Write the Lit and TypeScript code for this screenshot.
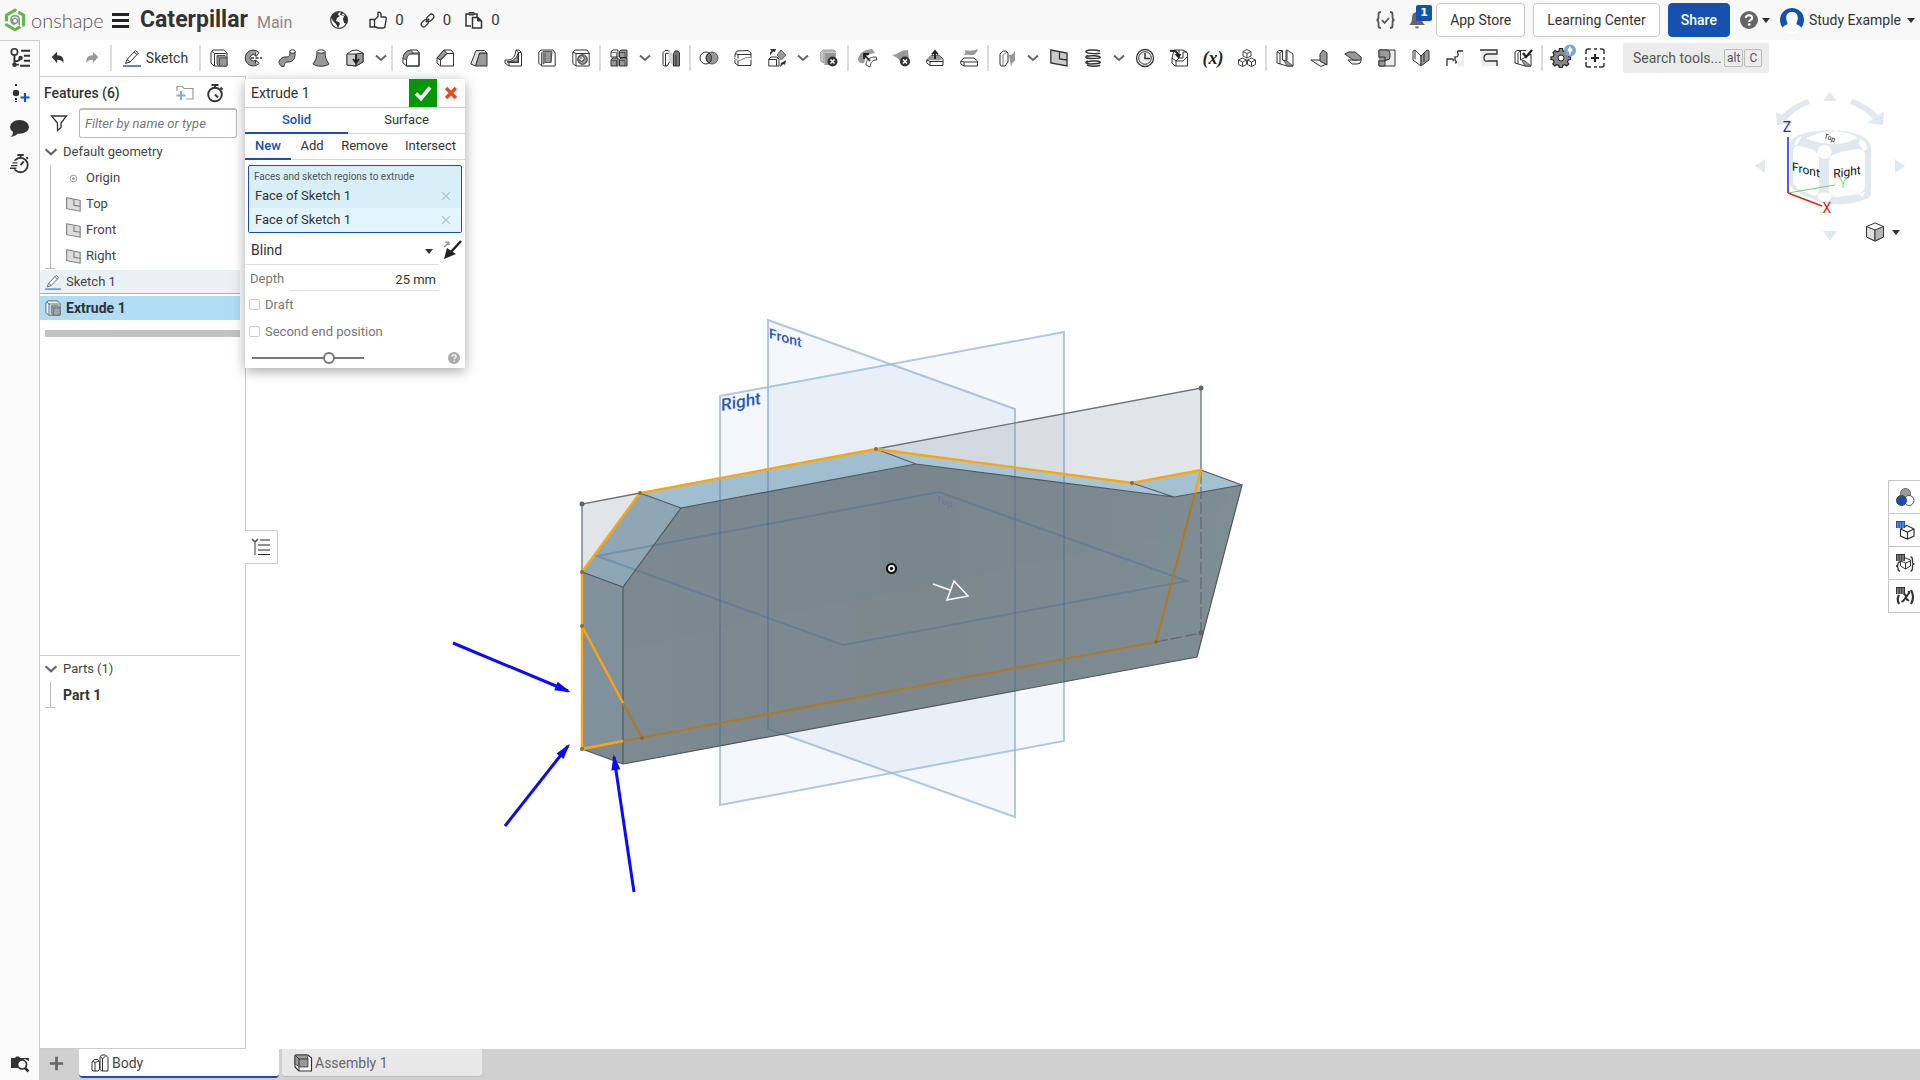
import { LitElement, html, svg, css, TemplateResult, SVGTemplateResult } from "lit";
import { customElement, state } from "lit/decorators.js";
import { classMap } from "lit/directives/class-map.js";

/* Icon strokes are drawn on an 18-unit grid. */
const K = "#333";
const G = "#999";

const ICONS: Record<string, SVGTemplateResult> = {
  undo: svg`<path d="M2 8 8 2v4c6 0 8 4 7 9-1-3-3-4-7-4v4z" fill="#333"/>`,
  redo: svg`<path d="M16 8 10 2v4c-6 0-8 4-7 9 1-3 3-4 7-4v4z" fill="#999"/>`,
  sketch: svg`<path d="M2.500 14.500 4 10.500 12.500 1.500 15.500 4 7 13z M4 10.500 7 13 M11 3l3 2.500" fill="#fff" stroke=${K}/><path d="M0 17h18" stroke="#1651b0" stroke-width="1.400"/>`,
  extrude: svg`<path d="M1 3.500 3 1h11l3 3v13H4l-3-3z" fill="#fff" stroke=${K}/><path d="M4.500 17V4.500L2 2.500M4.500 4.500H16" fill="none" stroke=${K}/><path d="M7 6.500h8l2 2V17H9l-2-2z" fill=${G} stroke="#555"/><path d="M9.500 17V9H17M9.500 9 7.500 7" fill="none" stroke="#555"/>`,
  revolve: svg`<path d="M15 3.500A8 8 0 1 0 15 14.500L11.500 11A3.200 3.200 0 1 1 11.500 6.500z" fill=${G} stroke=${K}/><path d="M11.500 3.500 12 7.500 15 3.500M11.500 14.500V11L15 14.500" fill="#fff" stroke=${K}/><path d="M7 9h11" stroke=${K} stroke-width="1.500" stroke-dasharray="3 1.500"/>`,
  sweep: svg`<path d="M1 12.500c2-4 4-4.500 7-4.500 3.500 0 4-1.500 4-6h5c.500 7-1 11-7 11-3 0-3 1-4 4.500-3 .500-5-2-5-5z" fill=${G} stroke=${K}/><ellipse cx="14.500" cy="2.500" rx="2.700" ry="1.800" fill="#fff" stroke=${K}/>`,
  loft: svg`<path d="M5 2.500C5 8 4 11 1 15c4 3 12 3 16 0-3-4-4-7-4-12.500z" fill=${G} stroke=${K}/><ellipse cx="9" cy="2.500" rx="4" ry="1.700" fill="#fff" stroke=${K}/>`,
  thicken: svg`<path d="M1 5 6 1.500l5-.500 6 3v9l-7 4-9-1z" fill="#fff" stroke=${K}/><path d="M1 5h9v12l-9-1z" fill="#ccc" stroke=${K}/><path d="M10 5l7-1v9l-7 4z" fill=${G} stroke=${K}/><path d="M10 5.500v7M7 10l3 4 3-4" fill="none" stroke="#222" stroke-width="1.800"/>`,
  fillet: svg`<path d="M4.500 17V10q0-5 5-5H17v12z" fill="#fff" stroke=${K}/><path d="M1 14V9q1-7 8-8h6l2.500 3H10q-5.500 0-5.500 6v7z" fill="#fff" stroke=${K}/><path d="M1 9.500Q1.500 2 9 1l2.500 3.500Q5 4 4.500 11z" fill=${G} stroke=${K} stroke-width=".7"/><path d="M4.500 17h12.500V4" fill="none" stroke=${K} stroke-width="1.200"/>`,
  chamfer: svg`<path d="M1 14V9l7-8h7l2.500 3v13H4.500z" fill="#fff" stroke=${K}/><path d="M1 9l7-8 3 3.500-6.500 6.500z" fill=${G} stroke=${K}/><path d="M4.500 17v-6L11 4.500h6" fill="none" stroke=${K}/>`,
  draft: svg`<path d="M5.500 17 9.500 4H17v13z" fill=${G} stroke=${K}/><path d="M.8 15 6 1.500h8.500L17 4H9.500L5.500 17z" fill="#ddd" stroke=${K}/>`,
  rib: svg`<path d="M12 1h3l2.500 2.500V17H5l-4-3v-3h4q6-1 7-10z" fill="#fff" stroke=${K}/><path d="M14 4.500V13H3Q12 12 14 4.500z" fill=${G} stroke=${K}/><path d="M5 17v-3.500h9.500V3.500H17M14 3.500 12 1" fill="none" stroke=${K}/>`,
  shell: svg`<path d="M.8 3 3 1h12l2.200 3v13H4l-3.200-2.500z" fill="#fff" stroke=${K}/><path d="M5 2.500h9l-1 11H7L5 15z" fill=${G} stroke="#555"/><path d="M3.500 17V3.500M7 4v9.500h6V4" fill="none" stroke="#555"/>`,
  hole: svg`<path d="M.8 3 3 1h12l2.200 3v13H4l-3.200-2.500z" fill="#fff" stroke=${K}/><path d="M4 17V4.500h13M4 4.500.8 3" fill="none" stroke=${K}/><circle cx="10.500" cy="10.500" r="4.800" fill=${G} stroke=${K}/><circle cx="9.500" cy="9.500" r="2.700" fill="#fff" stroke=${K}/><circle cx="9" cy="9" r="1.400" fill=${G}/>`,
  pattern: svg`<path d="M1 2.500 3 1h5v7H1z" fill="#fff" stroke=${K}/><path d="M9.500 2.500 11 1h6v7.500H9.500zM1 10.500 3 9h5v8H1zM9.500 10.500 11 9h6v8H9.500z" fill=${G} stroke=${K}/><path d="M9.500 3.500h5.500v5M1 11.500h5.500V17M9.500 11.500H15V17M1 3.500h5.500v5" fill="none" stroke=${K} stroke-width=".7"/>`,
  mirror: svg`<path d="M1 3.500 3 1.500h3.500l1 2V13L5 17H2l-1-1.500z" fill="#fff" stroke=${K}/><path d="M3.500 17V4.500H7" fill="none" stroke=${K}/><path d="M6.500 0l5 6v11l-5-5z" fill="#d5d5d5"/><path d="M11.500 5l1.500-3h3l1.500 2v13h-6z" fill="#777" stroke=${K}/><path d="M14 17V6" stroke=${K}/>`,
  boolean: svg`<circle cx="6" cy="9" r="6" fill="#fff" stroke=${K}/><circle cx="12" cy="9" r="6" fill=${G} stroke="#555"/><path d="M9 4a6 6 0 0 1 0 10 6 6 0 0 1 0-10z" fill="#777" stroke=${K}/>`,
  split: svg`<path d="M1 5 3 2l11-.500L17 4v12.500H4L1 14z" fill="#fff" stroke=${K}/><path d="M4 16V5.500H17M4 5.500 1 4.500" fill="none" stroke=${K}/><path d="M0 9c5 4 12 2 18 0" fill="none" stroke="#fff" stroke-width="2.500"/><path d="M0 9c3 3 6 3 9 1s6-2 9-1" fill="none" stroke="#777"/>`,
  transform: svg`<path d="M.8 10 3 8h6l2 2v7H.8z" fill="#fff" stroke=${K}/><path d="M.8 10.500H8.500V17M8.500 10.500 10 8.500" fill="none" stroke=${K}/><path d="M13 1 18 6l-4.500 5L9 6z" fill=${G} stroke="#666"/><path d="M2 6.500V3l1.500-1L2 0h6L7 3 5 2.500z" fill=${K}/><path d="M18 11l-1 5-1.500-1L12 18l1-4z" fill=${K}/>`,
  deletePart: svg`<path d="M.8 3 3 1h11l2 2H4v11l-3.200-2z" fill="#ccc" stroke=${G}/><path d="M4.500 4H16v12H4.500z" fill=${G}/><circle cx="12.500" cy="12.500" r="5" fill=${K}/><path d="m10.500 10.500 4 4m0-4-4 4" stroke="#fff" stroke-width="1.500"/>`,
  modFillet: svg`<path d="M0 11Q1 1 14 0l3 4q-9 0-11 10-4 1-6-3z" fill=${G}/><path d="M8 16c0-5 3-8 10-8l1 3c-5 0-6 2-7 7z" fill="#fff" stroke="#444"/><path d="M12 12 6 5.500M6 10V5h5" fill="none" stroke="#222" stroke-width="1.800"/>`,
  deleteFace: svg`<path d="M0 6c5 0 8-5 16-5l1 10-8 4C7 9 4 8 0 6z" fill=${G}/><circle cx="13" cy="12.500" r="5" fill=${K}/><path d="m11 10.500 4 4m0-4-4 4" stroke="#fff" stroke-width="1.500"/>`,
  moveFace: svg`<path d="M.8 11 5 6.500h8.500L17 10v6.500H4L.8 14z" fill="#fff" stroke=${K}/><path d="M.8 11 5 6.500h8.500L17 10l-4 1.500z" fill=${G}/><path d="M.8 11 4 12.500h13M4 12.500v4" fill="none" stroke=${K}/><path d="M9 10V3M6 5.500 9 2l3 3.500" fill="none" stroke="#222" stroke-width="1.900"/>`,
  replaceFace: svg`<path d="M1 7q6-2 4-6 6 2 13-1-2 7-8 6-5-1-9 1z" fill=${G}/><path d="M.8 12 4 9h10l3.500 3v5H4l-3.200-2z" fill="#fff" stroke=${K}/><path d="M4 17v-4h13M4 13 .8 12" fill="none" stroke=${K}/>`,
  offset: svg`<path d="M2 5 5 2h3l2 2v9l-3 4H3l-1-2z" fill="#fff" stroke=${K}/><path d="M5 17V6l4-3" fill="none" stroke="#777"/><path d="M11 6q5 0 6-5v11q-3 1-4 6z" fill=${G}/>`,
  plane: svg`<path d="M.8 1 17 4v13L.8 14z" fill="#ccc" stroke=${K} stroke-width="1.300"/><path d="M9.500 3v7l7.500 1" fill="none" stroke=${K} stroke-width="1.300"/>`,
  helix: svg`<path d="M16 2C10 0 1 1 2 3s14 2 14 1M4 6.500C0 8 2 9.500 8 9.500S17 9 16 8 5 6 3.500 7.500M4 12c-4 1-2 3 3 3s10-.500 9-2-10-1-13 0M3 16c2 1.500 9 1.500 13 .500" fill="none" stroke=${K} stroke-width="1.500"/>`,
  clock: svg`<circle cx="9" cy="9" r="8.500" fill="#fff" stroke=${K} stroke-width="1.300"/><circle cx="9" cy="9" r="6.300" fill="#eee" stroke=${K}/><path d="M9 4v5.500h5" fill="none" stroke=${K} stroke-width="1.500"/>`,
  derive: svg`<path d="M4 1h9l4.500 3v13H5l-3-3V9z" fill="#fff" stroke=${K}/><path d="M9 1v8l-3 3v5M9 9h4V3h4M2 9l4 3h7l4-4" fill="none" stroke=${K}/><path d="M0 2q7-1 8 4" fill="none" stroke="#222" stroke-width="2"/><path d="M4.500 5h7L8.500 9.500z" fill="#222"/>`,
  composite: svg`<g fill="#fff" stroke=${K} stroke-width=".9"><path d="M9 0.500 13 2.500v4.500l-4 2-4-2V2.500z"/><path d="M5 2.500l4 2 4-2M9 4.500V9"/><path d="M4.500 9 8.500 11v4.500l-4 2-4-2V11z"/><path d="M.5 11l4 2 4-2M4.500 13v4.500"/><path d="M13.500 9l4 2v4.500l-4 2-4-2V11z"/><path d="M9.500 11l4 2 4-2M13.500 13v4.500"/></g>`,
  flange: svg`<path d="M1 3 3 1.500h3.500V11L10 12V1.500l1-.5 6 4v12h-6L1 14z" fill="#fff" stroke=${K}/><path d="M8 11.500h2.500l6.500 5.500h-6z" fill=${G} stroke=${K} stroke-width=".8"/><path d="M4 15V4.500L6 2M1 3l3 1.500M11 1v10.500" fill="none" stroke=${K}/>`,
  bendFlange: svg`<path d="M.8 11h9l7 4-6 2.500z" fill="#eee" stroke=${K}/><path d="M10 5 13 1l4 3v12l-7-4z" fill=${G} stroke=${K}/>`,
  hem: svg`<path d="M4 11h9q4-1 4-2v3q0 3-4 3H8z" fill="#eee" stroke=${K}/><path d="M.8 5 5 3h6l6 5q1 4-3 3H9z" fill=${G} stroke=${K}/>`,
  tab: svg`<path d="M1 1h16v16H1v-6h8V9H1z" fill="#eee" stroke=${K}/><path d="M1 1h8q3 0 3 4v3q0 3-3 3H7v6H1v-5h6V8H1z" fill=${G} stroke=${K}/>`,
  bend: svg`<path d="M1 2l2-1 6 6v10L1 11z" fill="#fff" stroke=${K}/><path d="M9 7l6-6 2 1v9l-8 6z" fill=${G} stroke=${K}/><path d="M3 1v9M12 4v9" stroke=${K}/>`,
  joint: svg`<path d="M9 1h9v16h-7v-6h5V6h-7z" fill="#eee"/><path d="M17 2h-5q-1 1 0 2.500Q13 8 9 8v3q3 3 0 3M1 17v-7h5q2 0 1 2" fill="none" stroke=${K} stroke-width="1.300"/>`,
  corner: svg`<path d="M1 1h17v16H1z" fill="#eee"/><path d="M0 1h17v4h-9q-4 0-4 4t4 3h9v5" fill="none" stroke=${K} stroke-width="1.300"/>`,
  finish: svg`<path d="M1 3 3 1.500h3.500V11L17 5v12h-6L1 14z" fill="#fff" stroke=${K}/><path d="M8 11.500h2.500l6.500 5.500h-6z" fill=${G} stroke=${K} stroke-width=".8"/><path d="M6.500 11V1.500H12M4 15V4.500L6 2" fill="none" stroke=${K}/><path d="M9 4l3 4 6-7" fill="none" stroke="#222" stroke-width="2.300"/>`,
  gear: svg`<path d="M7.500 1h3l.5 2.500 2 .800 2-1.500 2 2-1.300 2.200.800 2L18.500 9.500v2.500l-2.200.500-.800 2 1.300 2-2 2-2-1.300-2 .800-.500 2h-3l-.500-2-2-.800-2 1.300-2-2 1.300-2-.800-2-2.300-.500V9.500l2.300-.500.800-2L1 5l2-2 2 1.300 2-.800z" transform="translate(0 -1.500)" fill="#888" stroke="#222" stroke-width="1.200"/><circle cx="9" cy="9" r="3" fill="#fff" stroke="#222"/><circle cx="18" cy="1.500" r="6" fill="#7aa5d6"/><path d="M18-2.500v8M16.500-.500v3M19.500-.500v3" stroke="#fff" stroke-width="1.500"/>`,
  frameAdd: svg`<path d="M0 5V2q0-2 2-2h3M8 0h3M14 0h2q2 0 2 2v3M18 8v3M18 14v2q0 2-2 2h-3M11 18H8M5 18H2q-2 0-2-2v-3M0 11V8" fill="none" stroke=${K} stroke-width="1.500"/><path d="M9 5v8M5 9h8" stroke="#222" stroke-width="2"/>`,
  globe: svg`<circle cx="9" cy="9" r="8.300" fill="#fff" stroke=${K} stroke-width="1.200"/><path d="M2 4Q4 1 9 1l-1 3 2 1-3 2-1 3 3 1 1 2-2 4-2-4-3-3-2-4zM11 1l2 1-1 2 5 1 1 4-1 4-3-1-1-4 1-3-4-1z" fill=${K}/>`,
  thumb: svg`<path d="M1 8.500h4.500V16H1zM5.500 9 9 5.500V1.500Q11 .500 12 3v3h4q1.500 0 1.200 2L16 15q0 2-2 2H9l-3.500-1.500" fill="#fff" stroke=${K} stroke-width="1.400" stroke-linejoin="round"/>`,
  link: svg`<g fill="none" stroke=${K} stroke-width="1.500" transform="rotate(-45 9 9)"><rect x="-.5" y="6" width="9.500" height="6" rx="3"/><rect x="9" y="6" width="9.500" height="6" rx="3"/><path d="M6 9h6"/></g>`,
  paste: svg`<path d="M6 15H1V3h3M9 3h3v3" fill="none" stroke=${K} stroke-width="1.500"/><path d="M4 1.500h5V4H4z" fill="#777" stroke=${K}/><path d="M7.500 6.500H13L16.500 10v7h-9z" fill="#fff" stroke=${K} stroke-width="1.500"/><path d="M12.500 6.500V10h4" fill=${K} stroke=${K}/>`,
  braces: svg`<path d="M5 1Q2.500 1 2.500 3v3Q2.500 9 .500 9q2 0 2 3v3q0 2 2.500 2M14 1q2.500 0 2.500 2v3q0 3 2 3-2 0-2 3v3q0 2-2.500 2" fill="none" stroke="#555" stroke-width="1.800"/><path d="m6 9 2.500 3 4.500-5" fill="none" stroke="#555" stroke-width="1.800"/>`,
  bell: svg`<path d="M9 1q5 0 5 6 0 5 3 7H1q3-2 3-7 0-6 5-6z" fill="#666"/><path d="M7 15.500h4q0 2-2 2t-2-2z" fill="#666"/>`,
  help: svg`<circle cx="9" cy="9" r="9" fill="currentColor"/><path d="M5.800 6.800Q6 4.200 9 4.200t3.200 2.500Q12.200 8.300 10.500 9 9.200 9.600 9.200 11" fill="none" stroke="#fff" stroke-width="2"/><circle cx="9.200" cy="13.500" r="1.300" fill="#fff"/>`,
  avatar: svg`<circle cx="9" cy="9" r="9" fill="#1651b0"/><path d="M9 3c3.500 0 4.500 2.500 4.300 5-.2 2-1 3-1 4 1 1 3.500 1 3.700 3.500Q13.500 19 9 19t-7-3.500C2.200 13 4.700 13 5.700 12c0-1-.8-2-1-4C4.500 5.500 5.500 3 9 3z" fill="#fff"/>`,
  tree: svg`<circle cx="4" cy="3.500" r="2.800" fill="none" stroke=${K} stroke-width="1.500"/><path d="M4 6v9h4M4 12q5 0 5-3" fill="none" stroke=${K} stroke-width="1.700"/><circle cx="4" cy="15" r="2" fill=${K}/><circle cx="9.500" cy="9" r="2" fill=${K}/><path d="M10 2.500h8M12.500 7h5.500M12.500 11.500h5.500M9 16h9" stroke=${K} stroke-width="1.800"/>`,
  addNode: svg`<path d="M5 0v3M5 14v4" stroke=${K} stroke-width="2" stroke-dasharray="2 1"/><circle cx="5" cy="9" r="3.200" fill=${K}/><path d="M14 9v9M9.500 13.500h9" stroke="#1651b0" stroke-width="2.200"/>`,
  chat: svg`<ellipse cx="9" cy="7.500" rx="9" ry="6.500" fill=${K}/><path d="M3 12q0 3-2.500 5Q6 16 8 13z" fill=${K}/>`,
  timer: svg`<circle cx="10" cy="10.500" r="6.800" fill="none" stroke=${K} stroke-width="1.700"/><path d="M7 1h6M10 1v3M15.500 3l1.500 1.500M10 10.500l3-3.500" stroke=${K} stroke-width="1.800"/><path d="M0 13h7M1 10.500h6M2.500 8H8" stroke="#fafafa" stroke-width="3"/><path d="M0 13.500h6M1 11h6M2.500 8.500H7" stroke=${K} stroke-width="1.200"/>`,
  stopwatch: svg`<circle cx="9" cy="10.500" r="6.800" fill="none" stroke=${K} stroke-width="1.900"/><path d="M5.500 1h7M9 1v3M14.500 3.500l2 2M9 10.500 12 13.500" stroke=${K} stroke-width="2"/>`,
  inspect: svg`<path d="M0 3h4l1-1.500h3L9 3h9v3L14 4 8 7v6H0z" fill=${K}/><circle cx="11" cy="9.500" r="4.500" fill="#fafafa" stroke=${K} stroke-width="1.700"/><path d="m14 13 3.500 3.500" stroke=${K} stroke-width="2.500"/>`,
  folderAdd: svg`<path d="M1 7V2.500h5.500l1.500 2h9V15H10" fill="none" stroke=${G} stroke-width="1.200"/><path d="M5 7v9M.5 11.500h9" stroke="#7fa8dc" stroke-width="2"/>`,
  funnel: svg`<path d="M1.500 2h15L11 9v4.500L7.500 16.500V9z" fill="#fff" stroke=${K} stroke-width="1.300"/>`,
  origin: svg`<circle cx="9" cy="9" r="4" fill="#fff" stroke="#666" stroke-width="1.200"/><circle cx="9" cy="9" r="1.500" fill="#555"/>`,
  chev: svg`<path d="m4 6.500 5 4.500 5-4.500" fill="none" stroke="#666" stroke-width="2"/>`,
  chevTree: svg`<path d="m2 5.500 7 6.500 7-6.500" fill="none" stroke="#666" stroke-width="2.800"/>`,
  body: svg`<path d="M1 8 3 5.500h4L8.500 8v7L7 17H2l-1-1z" fill="#fff" stroke=${K}/><path d="M4 17V8.500L2 7M4 8.500 8 7" fill="none" stroke=${K}/><path d="M9 3l1.500-2h4L17 3.500V17h-6l-2-1.500z" fill="#fff" stroke=${K}/><path d="M11.500 17V5L9.500 2.500M11.500 5l3-3" fill="none" stroke=${K}/>`,
  assembly: svg`<path d="M1 2.500Q1 1 3 1h11l3.500 3v13H5l-4-4z" fill="#fff" stroke=${K} stroke-width="1.200"/><path d="M1 1h12l1 4v8H6l-5-3z" fill=${G} stroke=${K} stroke-width=".8"/><path d="M1 1 5 5h9M5 5v12" fill="none" stroke=${K}/>`,
  plus: svg`<path d="M9 1v16M1 9h16" stroke="#666" stroke-width="3.200"/>`,
  flip: svg`<path d="M18 0 8 11" stroke="#222" stroke-width="2.500"/><path d="M1 18 4 7l9 6z" fill="#222"/><path d="M1 6 6 1.500M6 1l-3.500.500M6 1v3" stroke=${G} stroke-width="1.500"/>`,
  spheres: svg`<circle cx="9.500" cy="5.500" r="5" fill=${G} stroke="#666"/><circle cx="13" cy="12.500" r="5" fill="#fff" stroke="#555"/><circle cx="5.500" cy="12.500" r="5" fill="#1651b0" stroke="#444"/>`,
  cubeTable: svg`<path d="M11 4.500 18 8v7l-6.500 3L4.500 15V8z" fill="#fff" stroke=${K} stroke-width="1.200"/><path d="m4.500 8 7 3L18 8M11.500 11v7" fill="none" stroke=${K} stroke-width="1.200"/><path d="M0 0h9v7H0z" fill="#1651b0"/><path d="M1 2h7M1 4h7M1 6h7" stroke="#9cc8f5" stroke-dasharray="1.700 .900"/>`,
  braceTable: svg`<path d="M4 8Q2 8 2 10t-2 2q2 0 2 2.500T4 17M14.500 3Q16.500 3 16.500 6v3l1.500 1-1.500 1v3q0 3-2 3" fill="none" stroke=${K} stroke-width="1.300"/><path d="m9.500 4 5 2v6l-5 3-5-3V6zM4.500 7l5 2 5-2M9.500 9v6" fill="#fff" stroke=${K}/><path d="M0 0h9v7H0z" fill=${K}/><path d="M1 2h7M1 4h7M1 6h7" stroke="#ccc" stroke-dasharray="1.700 .900"/>`,
  varTable: svg`<path d="M3 8Q.500 12 3 17M15 3q4 7 0 14" fill="none" stroke=${K} stroke-width="2.200"/><path d="M12 5.500Q14 4 13 6l-5 7q-1 2-2.500 1M7 7q2-1 3 3t3 3" fill="none" stroke=${K} stroke-width="2"/><path d="M0 0h9v7H0z" fill=${K}/><path d="M1 2h7M1 4h7M1 6h7" stroke="#ccc" stroke-dasharray="1.700 .900"/>`,
  outline: svg`<path d="m0 1 3 3 3-3" fill="none" stroke="#555" stroke-width="1.700"/><path d="M3 5v12" stroke=${G} stroke-width="2"/><path d="M8 2h10M6 7h12M6 12h12M6 16.500h12" stroke="#222" stroke-width="1.200"/>`,
  logo: svg`<path d="M9 1 16 5v8L9 17 2 13V5z" fill="none" stroke="#62b946" stroke-width="2.600" stroke-dasharray="14.300 1.800" stroke-dashoffset="-3"/><path d="M12.500 13V8.500Q12.500 5.500 9 5.500T5.700 9 9 12.500M9 7.500l2 1v2.500L9 12 7 11V8.500z" fill="none" stroke="#7c9a76" stroke-width="1.200"/>`,
  check: svg`<path d="m2 9.500 5 5L16 3.500" fill="none" stroke="#fff" stroke-width="3.600"/>`,
  cross: svg`<path d="m3.500 3.500 11 11m0-11-11 11" stroke="#e0501f" stroke-width="4"/>`,
  thin: svg`<path d="m4 4 10 10m0-10-10 10" stroke="#a9c3cf" stroke-width="1.600"/>`,
  box: svg`<path d="m9 0 8.500 3.500V14L9 18 .5 14V3.500z" fill="#fff" stroke="#333"/><path d="M.5 3.500 9 7v11L.5 14z" fill="#ddd" stroke="#333"/><path d="M9 7l8.500-3.500V14L9 18z" fill="#b5b5b5" stroke="#333"/>`,
};

const icon = (name: string, size = 18): TemplateResult =>
  html`<svg class="ic" viewBox="0 0 18 18" width=${size} height=${size} aria-hidden="true">${ICONS[name]}</svg>`;

type Tool = [string, string];
/* "|" is a divider, "v" a menu chevron. */
const TOOLS: (Tool | "|" | "v")[] = [
  ["extrude", "Extrude"], ["revolve", "Revolve"], ["sweep", "Sweep"], ["loft", "Loft"], ["thicken", "Thicken"], "v", "|",
  ["fillet", "Fillet"], ["chamfer", "Chamfer"], ["draft", "Draft"], ["rib", "Rib"], ["shell", "Shell"], ["hole", "Hole"], "|",
  ["pattern", "Pattern"], "v", ["mirror", "Mirror"], "|",
  ["boolean", "Boolean"], ["split", "Split"], ["transform", "Transform"], "v", ["deletePart", "Delete part"], "|",
  ["modFillet", "Modify fillet"], ["deleteFace", "Delete face"], ["moveFace", "Move face"], ["replaceFace", "Replace face"], "|",
  ["offset", "Offset surface"], "v", ["plane", "Plane"], ["helix", "Helix"], "v", ["clock", "Mass"], ["derive", "Derived"],
  ["variable", "Variable"], ["composite", "Composite part"], "|",
  ["flange", "Sheet metal model"], ["bendFlange", "Flange"], ["hem", "Hem"], ["tab", "Tab"], ["bend", "Bend"],
  ["joint", "Modify joint"], ["corner", "Corner"], ["finish", "Finish sheet metal"], "|",
  ["gear", "Custom features"], ["frameAdd", "Add custom feature"],
];

/** The modelling viewport: datum planes, the extruded part and its sketch. */
@customElement("part-viewport")
class PartViewport extends LitElement {
  static styles = css`
    :host { display: block; min-width: 0; min-height: 0; }
    .scene { display: block; width: 100%; height: 100%; font-family: "Open Sans", sans-serif; }
    .plane { fill: #5a8ec8; fill-opacity: 0.065; stroke: #8fb2d8; stroke-opacity: 0.7; stroke-width: 2; }
    .ghost { fill: none; stroke: #3d6592; stroke-opacity: 0.3; stroke-width: 2; }
    .edge { fill: none; stroke: #51585c; stroke-width: 1.2; }
    .hidden { fill: none; stroke: #51585c; stroke-width: 1.2; stroke-opacity: 0.7; stroke-dasharray: 12 3; }
    .gold { fill: none; stroke: #ffa50a; stroke-width: 2.4; }
    .dim { fill: none; stroke: #aa7c2a; stroke-width: 2.2; }
    .label { fill: #2a5ab8; font: 500 17px Roboto, sans-serif; }
    .label.far { font-size: 14px; }
    .label.under { font-size: 10px; opacity: 0.25; }
    .note { stroke: #0a0aff; stroke-width: 3; fill: #0a0aff; }
    .pale { fill: #e1e8ee; }
    .axis { font: 14px Roboto, sans-serif; text-anchor: middle; }
    .face { font: 12px Roboto, sans-serif; text-anchor: middle; fill: #111; }
    .face.lid { font-size: 7px; }
  `;

  private note(x1: number, y1: number, x2: number, y2: number) {
    const a = (Math.atan2(y2 - y1, x2 - x1) * 180) / Math.PI;
    return svg`<g class="note"><path d="M${x1} ${y1}L${x2} ${y2}"/>
      <path d="M3 0-13-4.500-13 4.500z" stroke="none" transform="translate(${x2} ${y2}) rotate(${a})"/></g>`;
  }

  render() {
    const planes = ["768,320 1015,409 1015,817 768,729", "720,396 1064,332 1064,741 720,805"];
    const topPlane = "597,556 939,492 1187,581 843,645";
    const face = "623,587 681,508 916,464 1174,497 1242,485 1197,657 623,764";
    return html`<svg class="scene" viewBox="246 76 1674 973" role="img" aria-label="Model view">
      <defs>
        <clipPath id="front"><polygon points=${"582,572 640,493 876,449 1132,483 1201,470 1242,485 1197,657 623,764 582,749"} /></clipPath>
        <linearGradient id="body" x1="0" x2="1"><stop offset="0" stop-color="#7c8991"/><stop offset=".5" stop-color="#7a868d"/><stop offset="1" stop-color="#7e8c94"/></linearGradient>
      </defs>
      ${planes.map((p) => svg`<polygon class="plane" points=${p}/>`)}
      <polygon points="582,504 640,493 582,572" fill="#7a8790" fill-opacity=".22"/>
      <polygon points="876,449 1201,388 1201,470 1132,483" fill="#7a8790" fill-opacity=".22"/>
      <path d="M582 572V504L640 493M876 449 1201 388V470" fill="none" stroke="#6a7378" stroke-width="1.300"/>
      <polygon points="582,572 623,587 623,764 582,749" fill="#81919c"/>
      <polygon points="582,749 623,741 623,764" fill="#7b8a91"/>
      <polygon points="582,572 640,493 681,508 623,587" fill="#8fa6b4"/>
      <polygon points="640,493 876,449 916,464 681,508" fill="#a1bed0"/>
      <polygon points="876,449 1132,483 1174,497 916,464" fill="#a8c5d6"/>
      <polygon points="1132,483 1201,470 1242,485 1174,497" fill="#a3c1d2"/>
      <polygon points=${face} fill="url(#body)"/>
      <path d="M768 618 933 583 1187 532 1242 485 1197 657 623 764V650z" fill="#8d989a" fill-opacity=".12"/>
      <g clip-path="url(#front)">
        ${[...planes, topPlane].map((p) => svg`<polygon class="ghost" points=${p}/>`)}
        <text class="label under" transform="translate(936 502) skewY(20)">Top</text>
      </g>
      <path class="edge" d="M582 572 623 587 681 508 916 464 1174 497 1242 485 1197 657 623 764 582 749M623 587V764M640 493 681 508M876 449 916 464M1132 483 1174 497M1201 470 1242 485"/>
      <path class="hidden" d="M1201 472V633L1156 642"/>
      <path class="dim" d="M623 703 642 738M623 741 1156 642 1195 493"/>
      <path class="gold" d="M623 741 582 749V572L640 493 876 449 1132 483 1201 470 1195 493M582 626 623 703"/>
      ${[[582, 504], [1201, 388], [1201, 633]].map(([x, y]) => svg`<circle cx=${x} cy=${y} r="2.500" fill="#5b666c"/>`)}
      ${[[640, 493], [876, 449], [1132, 483], [1156, 642], [642, 738], [582, 626], [582, 572], [582, 749]].map(
        ([x, y]) => svg`<circle cx=${x} cy=${y} r="2" fill="#8a6a38"/>`)}
      <text class="label far" transform="translate(769 338) skewY(16)">Front</text>
      <text class="label" transform="translate(721 411) skewY(-10)">Right</text>
      <circle cx="891.500" cy="568.500" r="4.500" fill="#fff" stroke="#111" stroke-width="2.200"/><circle cx="891.500" cy="568.500" r="1.700" fill="#111"/>
      <path d="M933 584 950 590M954 581 968 596 947 600z" fill="none" stroke="#fff" stroke-width="1.500"/>
      ${this.note(453, 643, 568, 691)} ${this.note(505, 826, 568, 746)} ${this.note(634, 892, 614, 757)}
      <g class="pale">
        <path d="M1823 101h14l-7-9zM1755 166l10-7v14zM1905 166l-10-7v14zM1823 231h14l-7 10z"/>
        <path d="M1808 99l2 5q-14 5-23 15l6 4-16 2-1-13 6 3q11-11 26-16zM1852 99l-2 5q14 5 23 15l-6 4 16 2 1-13-6 3q-11-11-26-16z"/>
        <path d="M1790 146q0-9 12-12 28-8 55 0 14 4 14 16v43q0 4-5 6-16 7-38 5-16-3-33-14-5-3-5-7z"/>
      </g>
      <g fill="#fff">
        <path d="M1793 152q0-7 7-6l11 3q8 3 8 10v31q0 7-7 5l-12-5q-7-4-7-11zM1829 163q0-8 8-10l19-4q9-1 9 6v31q0 6-7 8l-20 3q-9 1-9-7zM1806 138q10-5 24-7 13 0 24 4 6 3-1 5-10 5-24 4-14-1-23-6z"/>
        <circle cx="1824.500" cy="152" r="7"/><ellipse cx="1824.500" cy="197" rx="7" ry="4.500"/><ellipse cx="1863" cy="145" rx="3" ry="6" transform="rotate(-30 1863 145)"/>
        <path d="M1794 144q2-6 8-8l-6 10zM1859 194l7-2-4 5zM1832 129h7l-2 4z"/>
      </g>
      <text class="face" transform="translate(1806 174) skewY(14)">Front</text>
      <text class="face" transform="translate(1847 176) skewY(-8)">Right</text>
      <text class="face lid" transform="translate(1829 140) rotate(20)">Top</text>
      <path d="M1788 193V137" stroke="#2222dd" stroke-width="1.500"/>
      <path d="M1788 193 1835 185" stroke="#77cc77" stroke-width="1.200"/>
      <path d="M1788 193 1822 206" stroke="#dd2222" stroke-width="1.500"/>
      <text class="axis" x="1787" y="132" fill="#2222dd">Z</text>
      <text class="axis" x="1827" y="213" fill="#dd2222">X</text>
      <text class="axis" x="1843" y="188" fill="#99dd99">Y</text>
      <g transform="translate(1866 223)">${ICONS.box}</g>
      <path d="M1892 230h8l-4 5z" fill="#333"/>
    </svg>`;
  }
}

@customElement("app-root")
class AppRoot extends LitElement {
  @state() private kind = "Solid";
  @state() private mode = "New";

  static styles = css`
    :host {
      display: grid; grid-template: 40px 36px minmax(0, 1fr) 31px / 40px 206px minmax(0, 1fr);
      height: 100vh; overflow: hidden; background: #fff; color: #333;
      font: 14px/18px Roboto, "Liberation Sans", sans-serif;
    }
    * { box-sizing: border-box; }
    button { font: inherit; color: inherit; background: none; border: 0; padding: 0; margin: 0; display: inline-flex; align-items: center; justify-content: center; }
    .ic { display: block; flex: none; overflow: visible; }
    a { color: inherit; text-decoration: none; }

    .top { grid-column: 1 / -1; background: #f8f8f8; display: flex; align-items: center; height: 40px; padding: 0 5px 0 4px; }
    .brand { display: flex; align-items: center; gap: 5px; width: 108px; font: 300 20px/22px Lato, sans-serif; color: #555; }
    .burger { width: 17px; height: 15px; flex-direction: column; justify-content: space-between; margin-right: 11px; }
    .burger i { width: 17px; height: 3px; background: #222; }
    .doc { font-size: 23px; line-height: 28px; font-weight: 700; color: #333; margin: 0 9px 0 0; }
    .branch { font-size: 16px; color: #888; padding-top: 5px; margin-right: 38px; }
    .stat { display: flex; align-items: center; gap: 8px; margin-right: 21px; font-size: 15px; }
    .stat.num { margin-right: 16px; }
    .stat.wide { margin-right: 14px; }
    .fill { flex: 1; }
    .bell { position: relative; width: 18px; margin: 0 10px 0 14px; }
    .count { position: absolute; left: 8px; top: -6px; width: 16px; height: 16px; border-radius: 2px; background: #1651b0; color: #fff; font: 700 11px/16px "DejaVu Sans", sans-serif; text-align: center; }
    .btn { height: 34px; padding: 0 13px; border: 1px solid #c8c8c8; border-radius: 4px; background: #fff; font-size: 14px; margin-right: 8px; white-space: nowrap; }
    .btn.share { padding: 0 12px; background: #1651b0; border-color: #1651b0; color: #fff; font-weight: 500; margin-right: 10px; }
    .help { color: #666; gap: 4px; }
    .user { gap: 5px; margin-left: 10px; white-space: nowrap; }
    .caret { width: 0; height: 0; border: 4px solid transparent; border-top: 5px solid #333; border-bottom: 0; }
    .user .caret { margin-left: 1px; }

    .rail { grid-row: 2 / -1; border: 1px solid #ccc; border-width: 1px 1px 0 0; background: #fafafa; display: flex; flex-direction: column; align-items: center; padding: 7px 0 6px; gap: 15px; }
    .rail button { height: 20px; width: 30px; }
    .rail .last { margin-top: auto; }

    .tools { grid-column: 2 / -1; display: flex; align-items: center; min-width: 0; height: 36px; padding-left: 1px; }
    .tool { width: 34px; height: 34px; flex: none; }
    .more { width: 18px; height: 34px; flex: none; }
    .bar { width: 2px; height: 26px; margin: 0 1px; background: #dcdcdc; flex: none; }
    .pen { width: 85px; gap: 5px; height: 34px; flex: none; }
    .var { font: italic 700 18px/18px "Liberation Serif", serif; color: #222; }
    .search { margin-left: 11px; height: 30px; width: 146px; border-radius: 3px; background: #ececec; display: flex; align-items: center; padding: 0 10px; gap: 1px; flex: none; }
    .search input { border: 0; outline: 0; background: none; font: inherit; padding: 0; width: 90px; color: #444; }
    .search input::placeholder { color: #555; opacity: 1; }
    kbd { border: 1px solid #bbb; border-radius: 2px; font: 12px/16px Roboto, sans-serif; padding: 0 2px; color: #555; }
    kbd.key { padding: 0 4px; }

    .side { grid-column: 2; border: 1px solid #ccc; border-left: 0; display: flex; flex-direction: column; min-height: 0; padding-right: 5px; font-size: 13px; }
    .head { display: flex; align-items: center; height: 31px; padding: 0 16px 0 4px; gap: 12px; }
    .head h2 { font-size: 14px; line-height: 18px; font-weight: 500; margin: 0; flex: 1; }
    .filter { display: flex; align-items: center; gap: 11px; padding: 0 3px 0 10px; height: 30px; margin-bottom: 1px; }
    .filter input { flex: 1; min-width: 0; height: 30px; border: 1px solid #bbb; border-top-width: 2px; border-radius: 3px; padding: 0 5px; font: italic 13px/18px Roboto, sans-serif; }
    .filter input::placeholder { color: #777; opacity: 1; }
    ul { list-style: none; margin: 0; padding: 0; }
    .row { height: 26px; display: flex; align-items: center; justify-content: flex-start; gap: 5px; padding-left: 5px; width: 100%; color: #444; }
    .row.twig { padding-left: 4px; }
    .branchy { margin-left: 10px; border-left: 1px solid #bbb; position: relative; }
    .branchy::after { content: ""; position: absolute; left: -6px; bottom: 0; width: 10px; height: 1px; background: #bbb; }
    .branchy .row { padding-left: 15px; }
    .branchy .ic { opacity: 0.65; }
    .branchy .row.part { padding-left: 12px; font-weight: 700; font-size: 14px; color: #333; }
    .row.sketch { height: 24px; background: #ebf0f4; border-bottom: 1px solid #7fbbe8; margin: 1px 0 2px; }
    .row.sketch .ic { opacity: 0.75; }
    .row.active { height: 24px; background: #b0ddf4; font-weight: 700; font-size: 14px; color: #333; }
    .row.active .ic { opacity: 0.8; }
    .roll { height: 7px; background: #c2c2c2; margin: 10px 0 0 5px; }
    .parts { margin-top: 318px; border-top: 1px solid #ccc; }

    .stage { position: relative; min-width: 0; min-height: 0; display: grid; }
    .dialog { position: absolute; left: -1px; top: 3px; width: 220px; background: #fff; box-shadow: 0 3px 12px rgba(0, 0, 0, 0.35); font-size: 13px; }
    .dhead { display: flex; align-items: center; height: 29px; border-bottom: 1px solid #ccc; padding-left: 6px; }
    .dhead h2 { font: inherit; font-size: 14px; margin: 0; flex: 1; }
    .ok { width: 28px; height: 28px; background: #069606; }
    .no { width: 28px; height: 28px; }
    .tabs { display: grid; grid-template-columns: 46fr 42fr 63fr 69fr; height: 26px; border-bottom: 1px solid #d5d5d5; }
    .tabs.two { grid-template-columns: 103fr 117fr; }
    .tabs button { border-bottom: 2px solid transparent; height: 26px; }
    .tabs .on { color: #1651b0; font-weight: 500; border-bottom-color: #1651b0; }
    .pick { margin: 5px 3px 0; border: 1px solid #1651b0; border-radius: 2px; background: #d9eff8; }
    .pick p { margin: 0; font-size: 10px; line-height: 16px; color: #555; padding: 3px 5px 0; height: 18px; }
    .picked { display: flex; align-items: center; justify-content: space-between; height: 24px; padding: 0 8px 0 6px; }
    .picked + .picked { background: #e2f4fc; }
    .end { display: flex; align-items: center; height: 30px; margin-top: 2px; gap: 4px; }
    .choose { position: relative; width: 194px; height: 30px; border-bottom: 1px solid #ddd; display: flex; align-items: center; }
    .choose select { appearance: none; border: 0; background: none; font: inherit; font-size: 14px; color: #333; width: 100%; height: 28px; padding: 0 6px; }
    .choose .caret { position: absolute; right: 6px; top: 14px; }
    .depth { display: flex; align-items: end; height: 26px; width: 194px; padding-left: 5px; gap: 6px; color: #777; }
    .depth label { padding-bottom: 3px; flex: none; }
    .depth input { flex: 1; min-width: 0; border: 0; border-bottom: 1px solid #ddd; font: inherit; text-align: right; padding: 2px 3px; color: #333; height: 22px; }
    .tick { display: flex; align-items: center; gap: 5px; height: 27px; padding-left: 4px; color: #777; }
    .tick input { appearance: none; margin: 0; width: 11px; height: 11px; border: 1px solid #ccc; border-radius: 2px; }
    .foot { display: flex; align-items: center; justify-content: space-between; height: 23px; padding: 2px 5px 0 7px; color: #aaa; }
    .foot input { appearance: none; width: 112px; height: 12px; margin: 0; background: linear-gradient(#777, #777) center / 100% 2px no-repeat; }
    .foot input::-webkit-slider-thumb { appearance: none; width: 12px; height: 12px; border-radius: 50%; border: 2px solid #777; background: #fff; }
    .handle { position: absolute; left: -1px; top: 454px; width: 33px; height: 34px; border: 1px solid #ccc; border-left: 0; background: #fff; padding-right: 1px; }
    .dock { position: absolute; right: 0; top: 404px; width: 32px; border: 1px solid #c5c5c5; border-right: 0; background: #fff; display: flex; flex-direction: column; }
    .dock button { height: 33px; border-bottom: 1px solid #c5c5c5; }
    .dock button:last-child { border-bottom: 0; height: 32px; }

    .foottabs { grid-column: 2 / -1; background: #d0d0d0; display: flex; gap: 3px; padding: 0 0 2px; }
    .add { width: 36px; padding-right: 3px; }
    .tab { width: 200px; justify-content: flex-start; gap: 3px; padding: 0 12px; background: #e8e8e8; color: #666; border-radius: 0 0 4px 4px; border-bottom: 1px solid #bbb; height: 28px; }
    .tab.cur { background: #fff; color: #444; border-bottom: 2px solid #1651b0; height: 29px; }
  `;

  private tab(label: string, value: string, set: (v: string) => void) {
    return html`<button class=${classMap({ on: label === value })} @click=${() => set(label)}>${label}</button>`;
  }

  private tools() {
    return TOOLS.map((t) =>
      t === "|" ? html`<span class="bar"></span>`
      : t === "v" ? html`<button class="more" aria-label="More">${icon("chev")}</button>`
      : t[0] === "variable" ? html`<button class="tool var" aria-label=${t[1]}>(x)</button>`
      : html`<button class="tool" aria-label=${t[1]}>${icon(t[0])}</button>`);
  }

  render() {
    return html`
      <header class="top">
        <a class="brand" href="#">${icon("logo", 22)}<span>onshape</span></a>
        <button class="burger" aria-label="Document menu"><i></i><i></i><i></i></button>
        <h1 class="doc">Caterpillar</h1><span class="branch">Main</span>
        <span class="stat">${icon("globe")}</span>
        <span class="stat num">${icon("thumb")}0</span>
        <span class="stat wide">${icon("link", 15)}0</span>
        <span class="stat wide">${icon("paste")}0</span>
        <span class="fill"></span>
        <button aria-label="Checks">${icon("braces")}</button>
        <button class="bell" aria-label="Notifications">${icon("bell")}<span class="count">1</span></button>
        <button class="btn">App Store</button><button class="btn">Learning Center</button><button class="btn share">Share</button>
        <button class="help" aria-label="Help">${icon("help")}<span class="caret"></span></button>
        <button class="user">${icon("avatar", 24)}Study Example<span class="caret"></span></button>
      </header>

      <nav class="rail" aria-label="Panels">
        <button aria-label="Feature list">${icon("tree", 20)}</button>
        <button aria-label="Insert">${icon("addNode")}</button>
        <button aria-label="Comments">${icon("chat", 19)}</button>
        <button aria-label="History">${icon("timer", 19)}</button>
        <button class="last" aria-label="Inspect">${icon("inspect")}</button>
      </nav>

      <div class="tools" role="toolbar">
        <button class="tool" aria-label="Undo">${icon("undo", 16)}</button>
        <button class="tool" aria-label="Redo">${icon("redo", 16)}</button>
        <span class="bar"></span>
        <button class="pen">${icon("sketch")}Sketch</button>
        <span class="bar"></span>
        ${this.tools()}
        <label class="search"><input aria-label="Search tools" placeholder="Search tools..." /><kbd>alt</kbd><kbd class="key">C</kbd></label>
      </div>

      <aside class="side">
        <div class="head"><h2>Features (6)</h2>
          <button aria-label="New folder">${icon("folderAdd")}</button><button aria-label="Regeneration times">${icon("stopwatch")}</button></div>
        <div class="filter">${icon("funnel")}<input aria-label="Filter" placeholder="Filter by name or type" /></div>
        <button class="row twig">${icon("chevTree", 14)}Default geometry</button>
        <ul class="branchy">
          <li class="row">${icon("origin", 15)}Origin</li>
          ${["Top", "Front", "Right"].map((n) => html`<li class="row">${icon("plane", 15)}${n}</li>`)}
        </ul>
        <div class="row sketch">${icon("sketch", 16)}Sketch 1</div>
        <div class="row active">${icon("extrude", 16)}Extrude 1</div>
        <div class="roll"></div>
        <section class="parts">
          <button class="row twig">${icon("chevTree", 14)}Parts (1)</button>
          <ul class="branchy"><li class="row part">Part 1</li></ul>
        </section>
      </aside>

      <main class="stage">
        <part-viewport></part-viewport>
        <button class="handle" aria-label="Toggle feature list">${icon("outline")}</button>
        <section class="dialog" aria-label="Extrude">
          <div class="dhead"><h2>Extrude 1</h2>
            <button class="ok" aria-label="Accept">${icon("check")}</button><button class="no" aria-label="Cancel">${icon("cross", 16)}</button></div>
          <div class="tabs two">${["Solid", "Surface"].map((l) => this.tab(l, this.kind, (v) => (this.kind = v)))}</div>
          <div class="tabs">${["New", "Add", "Remove", "Intersect"].map((l) => this.tab(l, this.mode, (v) => (this.mode = v)))}</div>
          <div class="pick"><p>Faces and sketch regions to extrude</p>
            ${[0, 1].map(() => html`<div class="picked">Face of Sketch 1<button aria-label="Remove face">${icon("thin", 14)}</button></div>`)}</div>
          <div class="end"><div class="choose"><select aria-label="End type"><option>Blind</option></select><span class="caret"></span></div>
            <button aria-label="Flip direction">${icon("flip")}</button></div>
          <div class="depth"><label for="depth">Depth</label><input id="depth" .value=${"25 mm"} /></div>
          <label class="tick"><input type="checkbox" />Draft</label>
          <label class="tick"><input type="checkbox" />Second end position</label>
          <div class="foot"><input type="range" aria-label="Opacity" min="0" max="100" .value=${"71"} />
            <button aria-label="Extrude help">${icon("help", 12)}</button></div>
        </section>
        <div class="dock">
          ${[["spheres", "Appearance"], ["cubeTable", "Configurations"], ["braceTable", "Properties"], ["varTable", "Variables"]].map(
            ([i, l]) => html`<button aria-label=${l}>${icon(i)}</button>`)}
        </div>
      </main>

      <footer class="foottabs">
        <button class="add" aria-label="Add tab">${icon("plus", 15)}</button>
        <button class="tab cur">${icon("body")}Body</button>
        <button class="tab">${icon("assembly")}Assembly 1</button>
      </footer>`;
  }
}
